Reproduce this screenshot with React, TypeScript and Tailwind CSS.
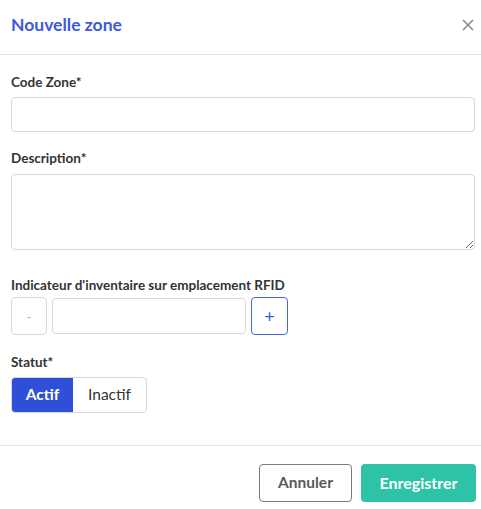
import React from 'react';

export default function App() {
  return (
    <div className="w-[481px] h-[509px] bg-white flex flex-col font-['Lato','Noto_Sans',sans-serif] text-[#333]">
      {/* en-tête */}
      <div className="h-[55px] flex items-center justify-between pl-[11px] pr-[3px] border-b border-[#e3e5e8] pb-[4px]">
        <span className="text-[17.5px] font-bold text-[#3a5ae0]">Nouvelle zone</span>
        <button className="w-[20px] h-[20px] flex items-center justify-center text-[#8a8a8a]">
          <svg width="12" height="12" viewBox="0 0 12 12" fill="none" stroke="currentColor" strokeWidth="1.6">
            <path d="M1 1L11 11M11 1L1 11" />
          </svg>
        </button>
      </div>

      {/* formulaire */}
      <div className="flex-1 flex flex-col pl-[11px] pr-[6px] pt-[19px]">
        <label className="text-[13.5px] font-bold leading-[16px]">Code Zone*</label>
        <input className="mt-[7px] h-[35px] w-full border border-[#d5d8dc] rounded-[4px] outline-none" />

        <label className="mt-[18px] text-[13.5px] font-bold leading-[16px]">Description*</label>
        <textarea className="mt-[8px] h-[76px] w-full border border-[#d5d8dc] rounded-[4px] outline-none resize-y" />

        <label className="mt-[27px] text-[13.5px] font-bold leading-[16px]">Indicateur d'inventaire sur emplacement RFID</label>
        <div className="mt-[4px] flex items-center gap-[5px]">
          <button className="w-[36px] h-[38px] border border-[#d5d8dc] rounded-[4px] text-[#bbb] text-[14px]">-</button>
          <input className="w-[194px] h-[36px] border border-[#d5d8dc] rounded-[4px] outline-none" />
          <button className="w-[37px] h-[38px] border-[1.5px] border-[#4466e6] rounded-[4px] text-[#3a5ae0] text-[18px] flex items-center justify-center">+</button>
        </div>

        <label className="mt-[19px] text-[13.5px] font-bold leading-[16px]">Statut*</label>
        <div className="mt-[7px] flex w-[136px] h-[36px] border border-[#d5d8dc] rounded-[4px] overflow-hidden">
          <span className="w-[61px] bg-[#2f4fd8] text-white font-bold text-[15.5px] flex items-center justify-center">Actif</span>
          <span className="flex-1 text-[15.5px] text-[#333] flex items-center justify-center">Inactif</span>
        </div>
      </div>

      {/* pied */}
      <div className="h-[64px] border-t border-[#e3e5e8] flex items-start justify-end gap-[9px] pt-[18px] pr-[5px]">
        <button className="w-[93px] h-[38px] border-[1.5px] border-[#7a7a7a] rounded-[4px] text-[#5a5a5a] font-bold text-[15.5px]">Annuler</button>
        <button className="w-[115px] h-[38px] bg-[#2ec2a6] rounded-[4px] text-white font-bold text-[16px]">Enregistrer</button>
      </div>
    </div>
  );
}
